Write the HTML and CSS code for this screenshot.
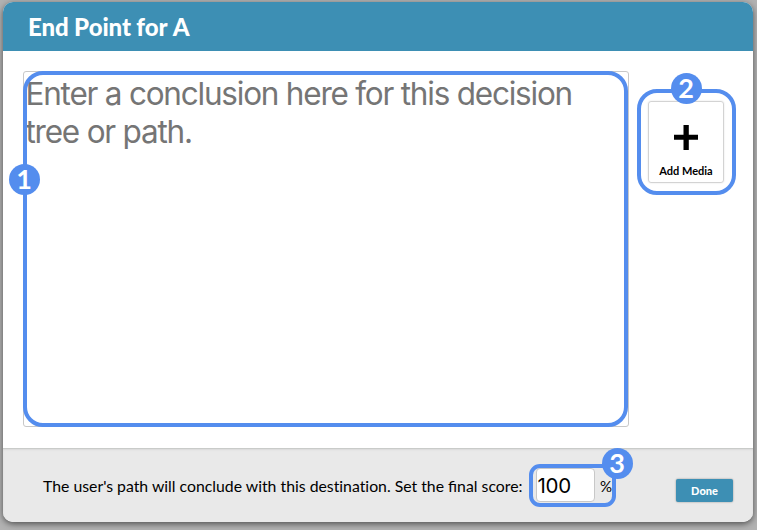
FILE: index.html
```html
<!DOCTYPE html>
<html lang="en">
<head>
<meta charset="utf-8">
<title>End Point for A</title>
<link rel="stylesheet" href="styles.css">
</head>
<body>
<main class="dialog">
  <header class="header"><h1 class="title">End Point for A</h1></header>
  <section class="content">
    <div class="editor">
      <p class="placeholder">Enter a conclusion here for this decision<br>tree or path.</p>
      <div class="outline outline-editor"></div>
      <span class="badge badge-1">1</span>
    </div>
    <div class="media">
      <svg class="plus" viewBox="0 0 24 25"><path d="M9.5 0h5.3v9.700H24v5.100h-9.200V25H9.500V14.800H0V9.700h9.500z"/></svg>
      <span class="media-label">Add Media</span>
      <div class="outline outline-media"></div>
      <span class="badge badge-2">2</span>
    </div>
  </section>
  <footer class="footer">
    <span class="message">The user's path will conclude with this <span class="plain">destination.</span> Set the final score:</span>
    <div class="score">
      <span class="score-box"><span class="score-value">100</span></span>
      <span class="percent">%</span>
      <div class="outline outline-score"></div>
      <span class="badge badge-3">3</span>
    </div>
    <div class="done"><span>Done</span></div>
  </footer>
</main>
</body>
</html>
```
FILE: styles.css
```css
* { box-sizing: border-box; }
body {
  margin: 0;
  width: 757px;
  height: 530px;
  padding: 2px 4px 8px 3px;
  background: #b2b2b2;
  font-family: Lato, sans-serif;
  color: #000;
  overflow: hidden;
}
.dialog {
  display: flex;
  flex-direction: column;
  height: 520px;
  border-radius: 10px;
  background: #fff;
  box-shadow: 0 2px 6px rgba(0, 0, 0, .55);
}
.header {
  display: flex;
  align-items: center;
  height: 49px;
  padding-left: 25px;
  border-radius: 10px 10px 0 0;
  background: #3d8fb4;
}
.title {
  margin: 0;
  color: #fff;
  font-size: 24px;
  line-height: 30px;
  font-weight: 900;
  font-kerning: none;
  letter-spacing: -.2px;
  white-space: nowrap;
}
.content {
  display: flex;
  align-items: flex-start;
  gap: 19px;
  height: 397px;
  padding: 20px 0 0 20px;
}
.editor {
  position: relative;
  width: 606px;
  height: 356px;
  border: 1px solid #c8c8c8;
  border-radius: 3px;
}
.placeholder {
  margin: 3px 0 0 1.5px;
  color: #757575;
  font-family: Inter, sans-serif;
  font-size: 31.5px;
  line-height: 38px;
  letter-spacing: -1.22px;
  white-space: nowrap;
}
.outline {
  position: absolute;
  border: 4px solid #548dee;
  border-radius: 20px;
}
.outline-editor { inset: -1px 0 -1px -1px; }
.badge {
  position: absolute;
  width: 31px;
  height: 31px;
  padding-right: 1px;
  border-radius: 50%;
  background: #548dee;
  color: #fff;
  font-size: 27px;
  line-height: 29px;
  font-weight: 700;
  text-align: center;
}
.badge-1 { left: -15px; top: 92px; }
.media {
  position: relative;
  display: flex;
  flex-direction: column;
  align-items: center;
  width: 76px;
  height: 82px;
  margin-top: 30px;
  padding-top: 23px;
  border: 1px solid #d3d3d3;
  border-radius: 3px;
  box-shadow: 0 0 2px rgba(0, 0, 0, .12);
}
.plus { width: 24px; height: 25px; }
.media-label {
  margin-top: 14px;
  font-size: 11px;
  line-height: 14px;
  font-weight: 700;
  white-space: nowrap;
}
.outline-media { inset: -13px -13px -13px -12px; }
.badge-2 { left: 22px; top: -29px; }
.footer {
  display: flex;
  height: 74px;
  padding-left: 40px;
  border-radius: 0 0 10px 10px;
  background: #e9e9e9;
  box-shadow: inset 0 1px #c9cbc9, inset 0 2px 2px #d9d9d9;
}
.message {
  width: 493px;
  margin-top: 28px;
  font-size: 15.8px;
  line-height: 20px;
  white-space: nowrap;
}
.plain { font-variant-ligatures: none; }
.score {
  position: relative;
  display: flex;
  width: 80px;
  height: 34px;
  margin-top: 20px;
}
.score-box {
  width: 59px;
  height: 34px;
  border: 1px solid #c8c8c8;
  border-radius: 4px;
  background: #fff;
  font-family: Inter, sans-serif;
  font-size: 20.5px;
  line-height: 34px;
  letter-spacing: -.3px;
  padding-left: .5px;
  white-space: nowrap;
}
.percent {
  margin: 8px 0 0 5px;
  font-size: 15px;
  line-height: 20px;
}
.outline-score { inset: -4px 0 -5px -7px; border-radius: 11px; }
.badge-3 { left: 66px; top: -20px; }
.done {
  width: 57px;
  height: 23px;
  margin: 31px 0 0 60px;
  border-radius: 2px;
  background: #3d8fb4;
  box-shadow: 0 0 2px rgba(0, 0, 0, .4);
  color: #fff;
  font-size: 11px;
  line-height: 24px;
  font-weight: 900;
  text-align: center;
}
```
